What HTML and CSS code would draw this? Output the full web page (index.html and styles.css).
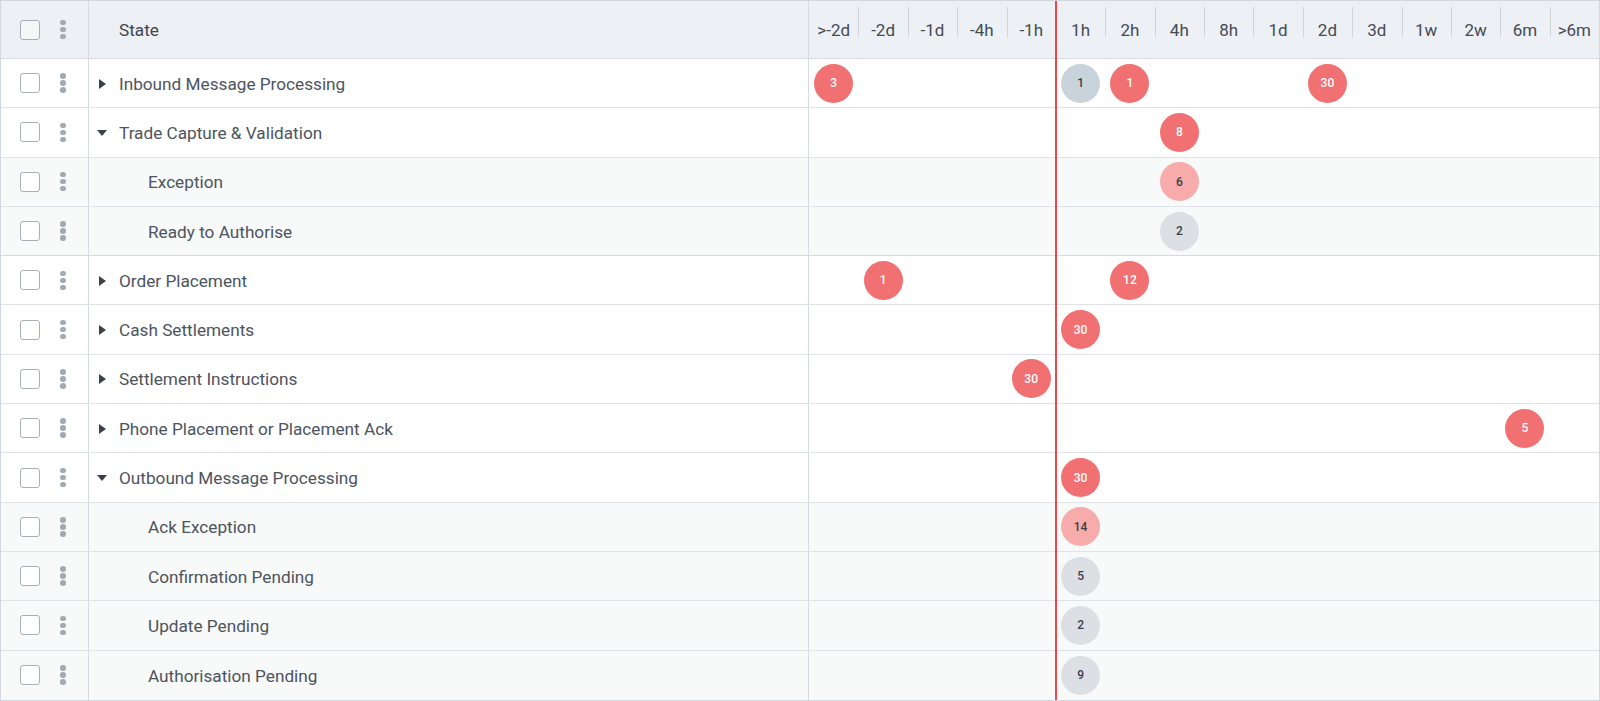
FILE: index.html
```html
<!DOCTYPE html>
<html lang="en">
<head>
    <meta charset="UTF-8">
    <title>State Ageing</title>
    <link rel="stylesheet" href="styles.css">
</head>
<body>
    <div class="table">
        <div class="row head">
            <div class="ctl"><span class="check"></span><span class="more"><i></i><i></i><i></i></span></div>
            <div class="state">State</div>
            <div class="times">
                <span>&gt;-2d</span><span>-2d</span><span>-1d</span><span>-4h</span><span>-1h</span>
                <span class="now">1h</span><span>2h</span><span>4h</span><span>8h</span><span>1d</span>
                <span>2d</span><span>3d</span><span>1w</span><span>2w</span><span>6m</span><span>&gt;6m</span>
            </div>
        </div>
    </div>

    <script>
        // columns: 1 = >-2d ... 6 = 1h ... 16 = >6m
        const rows = [
            { name: 'Inbound Message Processing', caret: 'right', dots: [[1, 3, 'red'], [6, 1, 'blue'], [7, 1, 'red'], [11, 30, 'red']] },
            { name: 'Trade Capture & Validation', caret: 'down', dots: [[8, 8, 'red']] },
            { name: 'Exception', child: true, dots: [[8, 6, 'pink']] },
            { name: 'Ready to Authorise', child: true, last: true, dots: [[8, 2, 'grey']] },
            { name: 'Order Placement', caret: 'right', dots: [[2, 1, 'red'], [7, 12, 'red']] },
            { name: 'Cash Settlements', caret: 'right', dots: [[6, 30, 'red']] },
            { name: 'Settlement Instructions', caret: 'right', dots: [[5, 30, 'red']] },
            { name: 'Phone Placement or Placement Ack', caret: 'right', dots: [[15, 5, 'red']] },
            { name: 'Outbound Message Processing', caret: 'down', dots: [[6, 30, 'red']] },
            { name: 'Ack Exception', child: true, dots: [[6, 14, 'pink']] },
            { name: 'Confirmation Pending', child: true, dots: [[6, 5, 'grey']] },
            { name: 'Update Pending', child: true, dots: [[6, 2, 'grey']] },
            { name: 'Authorisation Pending', child: true, dots: [[6, 9, 'grey']] }
        ];

        const table = document.querySelector('.table');
        rows.forEach(r => {
            const row = document.createElement('div');
            row.className = 'row' + (r.child ? ' child' : '') + (r.last ? ' group-end' : '');
            const caret = r.caret ? `<span class="tw"><span class="caret ${r.caret}"></span></span>` : '';
            const dots = r.dots.map(d => `<span class="bubble ${d[2]}" style="grid-column:${d[0]}">${d[1]}</span>`).join('');
            row.innerHTML = `
                <div class="ctl"><span class="check"></span><span class="more"><i></i><i></i><i></i></span></div>
                <div class="state">${caret}<span class="label"></span></div>
                <div class="times">${dots}</div>`;
            row.querySelector('.label').textContent = r.name;
            table.appendChild(row);
        });
    </script>
</body>
</html>
```

FILE: styles.css
```css
* { box-sizing: border-box; }
body { margin: 0; background: #fff; font-family: Roboto, "Noto Sans", Arial, sans-serif; color: #4b525c; }

.table { position: relative; width: 1600px; height: 701px; border: 1px solid #d3d8de; overflow: hidden; }
.table::after { content: ""; position: absolute; top: 0; bottom: 0; left: 1054px; width: 2px; background: #f0454a; }

.row { display: grid; grid-template-columns: 88px 720px 1fr; height: 49.3px; border-bottom: 1px solid #dfe3e8; background: #fff; }
.row:last-child { border-bottom: none; }
.row.child { background: #f8f9f9; }
.row.group-end { border-bottom-color: #d6dbe1; }
.row.head { height: 58px; background: #edf0f4; border-bottom: 1px solid #d6dbe1; }

.ctl { display: flex; align-items: center; border-right: 1px solid #d6dbe1; padding-left: 19px; }
.check { width: 20px; height: 20px; border: 1.5px solid #a9afb6; border-radius: 3px; background: #fff; }
.head .check { background: #f4f6f8; }
.more { display: flex; flex-direction: column; gap: 1.5px; margin-left: 20px; }
.more i { width: 5.5px; height: 5.5px; border-radius: 50%; background: #a3aab2; }

.state { display: flex; align-items: center; border-right: 1px solid #d6dbe1; font-size: 17.2px; color: #4d545e; padding-top: 1px; }
.head .state { padding-left: 30px; color: #3f454d; padding-top: 0; }
.child .state { padding-left: 59px; }
.tw { width: 25px; display: flex; justify-content: center; margin-right: 5px; }
.caret { width: 0; height: 0; }
.caret.right { border-left: 7px solid #3b4149; border-top: 5px solid transparent; border-bottom: 5px solid transparent; margin-left: 2px; }
.caret.down { border-top: 6px solid #3b4149; border-left: 5.5px solid transparent; border-right: 5.5px solid transparent; }

.times { display: grid; grid-template-columns: repeat(16, 1fr); align-items: center; justify-items: center; }
.head .times span { position: relative; width: 100%; text-align: center; font-size: 17px; color: #454b53; }
.head .times span + span::before { content: ""; position: absolute; left: 0; top: -13px; height: 30px; border-left: 1.5px solid #cfd4d9; }
.head .times span.now::before { display: none; }

.bubble { width: 39px; height: 39px; border-radius: 50%; display: flex; align-items: center; justify-content: center; font-size: 12px; font-weight: 500; color: #3a4049; grid-row: 1; }
.bubble.red { background: #f17172; color: #fff; }
.bubble.pink { background: #f8abab; }
.bubble.blue { background: #c8d3dc; }
.bubble.grey { background: #dcdfe3; }
```
